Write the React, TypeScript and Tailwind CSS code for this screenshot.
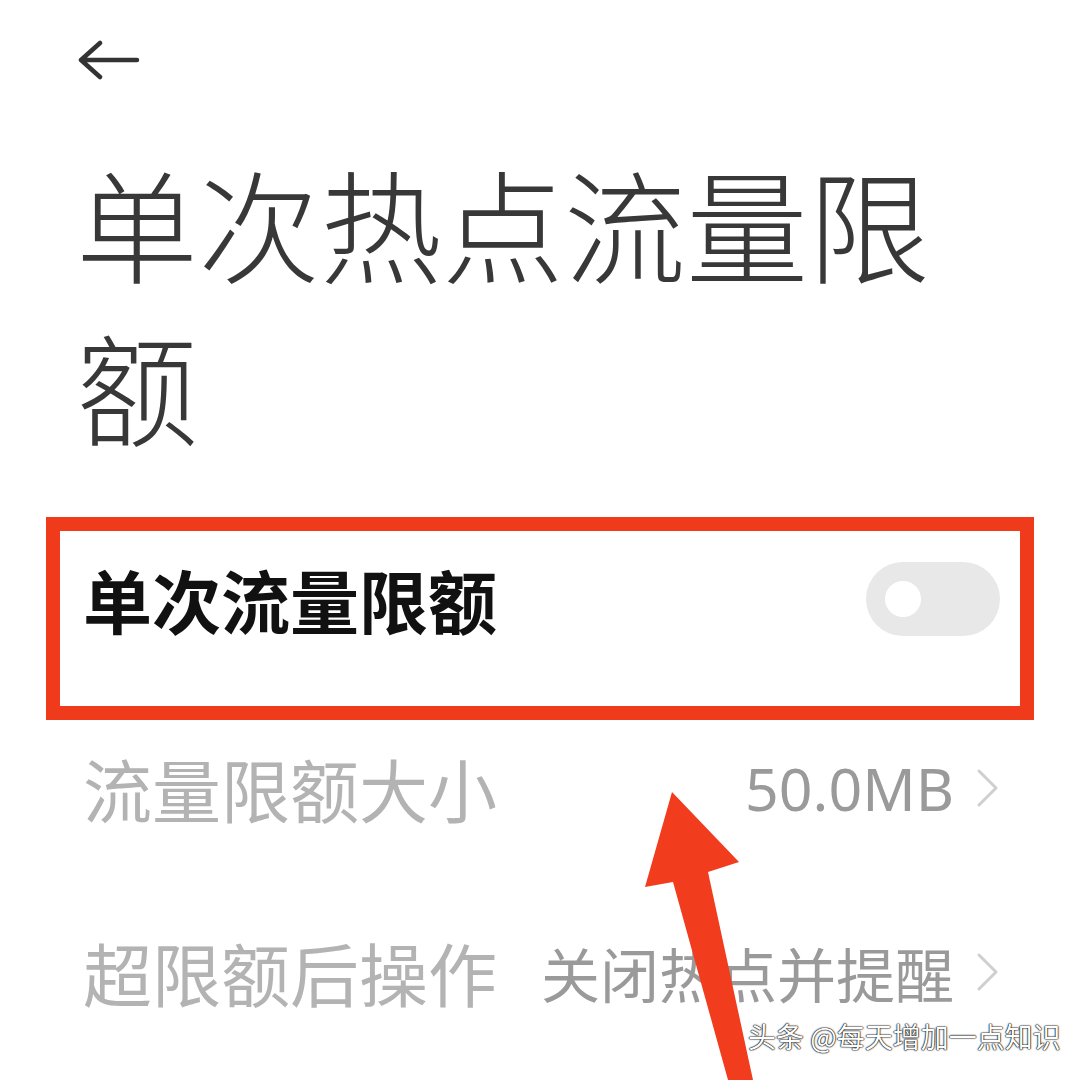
import React from "react";

const cjk = "font-['Noto_Sans_CJK_SC','Noto_Sans',sans-serif]";

function Chevron() {
  return (
    <svg width="24" height="40" viewBox="0 0 24 40" className="shrink-0">
      <path d="M3 3 L20 20 L3 37" fill="none" stroke="#cfcfcf" strokeWidth="3" strokeLinecap="round" strokeLinejoin="round" />
    </svg>
  );
}

function Toggle() {
  return (
    <div className="relative h-[74px] w-[134px] shrink-0 rounded-full bg-[#e8e8e8]">
      <div className="absolute left-[19px] top-[19px] h-[36px] w-[36px] rounded-full bg-white" />
    </div>
  );
}

export default function App() {
  return (
    <div className={`relative h-[1080px] w-[1080px] overflow-hidden bg-white ${cjk}`}>
      {/* back */}
      <div className="h-[139px] pl-[78px] pt-[40px]">
        <svg width="62" height="40" viewBox="0 0 62 40">
          <path d="M3 20 H59 M22 3 L3 20 L22 37" fill="none" stroke="#333" strokeWidth="4.5" strokeLinecap="round" strokeLinejoin="round" />
        </svg>
      </div>

      <h1 className="pl-[76px] pr-[100px] text-[122px] font-light leading-[163px] text-[#383838]">
        单次热点流量限额
      </h1>

      {/* highlighted switch row */}
      <div className="mx-[46px] mt-[52px] h-[203px] border-[14px] border-[#ef3a1c] pl-[23px] pr-[20px] pt-[31px]">
        <div className="flex h-[74px] items-center justify-between">
          <span className="text-[69px] font-bold leading-none text-[#111]">单次流量限额</span>
          <Toggle />
        </div>
      </div>

      <div className="ml-[83px] mr-[80px] mt-[18px] flex h-[100px] items-center justify-between">
        <span className="text-[69px] leading-none text-[#b3b3b3]">流量限额大小</span>
        <div className="flex items-center gap-[22px]">
          <span className="font-['Noto_Sans',sans-serif] text-[59px] leading-none text-[#9a9a9a]">50.0MB</span>
          <Chevron />
        </div>
      </div>

      <div className="ml-[83px] mr-[80px] mt-[84px] flex h-[100px] items-center justify-between">
        <span className="text-[69px] leading-none text-[#b3b3b3]">超限额后操作</span>
        <div className="flex items-center gap-[22px]">
          <span className="text-[59px] leading-none text-[#9a9a9a]">关闭热点并提醒</span>
          <Chevron />
        </div>
      </div>

      {/* annotation arrow */}
      <svg className="pointer-events-none absolute inset-0" width="1080" height="1080" viewBox="0 0 1080 1080">
        <polygon
          points="672,792 739,862 708,872 753,1080 728,1080 673,882 645,887"
          fill="#f23c1e"
        />
      </svg>

      <div className="absolute left-[748px] top-[1022px] whitespace-nowrap text-[28px] leading-none text-white [text-shadow:0_0_2px_#000,0_0_1px_#000,0_0_1px_#000]">
        头条 @每天增加一点知识
      </div>
    </div>
  );
}
